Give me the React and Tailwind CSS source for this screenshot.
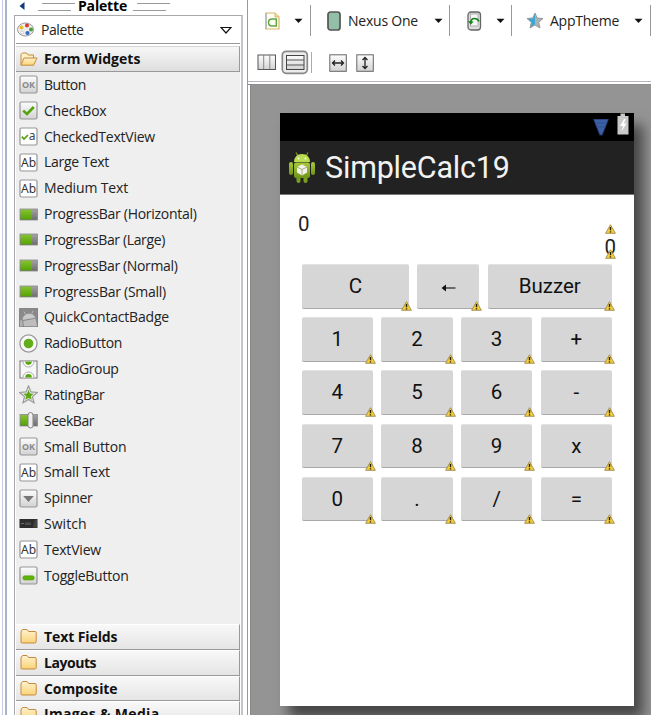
import { useLayoutEffect, useRef, useState } from "react";

const ui = "font-['Open_Sans','Noto_Sans_CJK_KR',sans-serif] text-[14px] leading-[20px] whitespace-nowrap";

// Text whose tracking is adjusted so that it fills the given width.
function Fit({ w, children, className = "" }) {
  const ref = useRef(null);
  const [ls, setLs] = useState(0);
  useLayoutEffect(() => {
    const natural = ref.current.getBoundingClientRect().width;
    setLs((w - natural) / children.length);
  }, []);
  return (
    <span ref={ref} className={`${ui} ${className}`} style={{ letterSpacing: ls }}>
      {children}
    </span>
  );
}

const Defs = () => (
  <svg width="0" height="0" className="absolute">
    <defs>
      <linearGradient id="btn" x1="0" y1="0" x2="0" y2="1"><stop offset="0" stopColor="#fdfdfd" /><stop offset="1" stopColor="#d2d2d2" /></linearGradient>
      <linearGradient id="green" x1="0" y1="0" x2="0" y2="1"><stop offset="0" stopColor="#86c232" /><stop offset="1" stopColor="#55a305" /></linearGradient>
      <linearGradient id="gray" x1="0" y1="0" x2="0" y2="1"><stop offset="0" stopColor="#a5a5a5" /><stop offset="1" stopColor="#6c6c6c" /></linearGradient>
      <linearGradient id="fold" x1="0" y1="0" x2="0" y2="1"><stop offset="0" stopColor="#fff3cf" /><stop offset="1" stopColor="#fbd277" /></linearGradient>
      <linearGradient id="droid" x1="0" y1="0" x2="0" y2="1"><stop offset="0" stopColor="#a9c93b" /><stop offset="1" stopColor="#6f9318" /></linearGradient>
    </defs>
  </svg>
);

const Box = ({ fill = "url(#btn)", children }) => (
  <>
    <rect x="1" y="1" width="17" height="17" rx="1.5" fill={fill} stroke="#969696" strokeWidth="1.2" />
    {children}
  </>
);

const glyph = "font-['Noto_Sans',sans-serif]";

const icons = {
  ok: <Box><text x="9.5" y="13" textAnchor="middle" fontSize="9" fontWeight="700" fill="#8b8b8b" className={glyph}>OK</text></Box>,
  check: <Box><path d="M4.2 9.6 L8 13 L14.8 6" fill="none" stroke="#55a30c" strokeWidth="2.6" /></Box>,
  checkedText: <Box fill="#fff"><path d="M2.8 9.6 L5 12 L9 8" fill="none" stroke="#55a30c" strokeWidth="1.7" /><text x="13.2" y="13.4" textAnchor="middle" fontSize="12" fill="#444" className={glyph}>a</text></Box>,
  ab: <Box fill="#fff"><text x="9.6" y="14" textAnchor="middle" fontSize="12" fill="#333" className={glyph}>Ab</text></Box>,
  progress: <><rect x="1" y="4" width="17.5" height="11" fill="url(#gray)" stroke="#8b8b8b" strokeWidth=".8" /><rect x="1.6" y="4.6" width="11.4" height="9.8" fill="url(#green)" /></>,
  badge: <><rect x=".6" y=".6" width="18" height="18" fill="#8a8a8a" stroke="#777" strokeWidth=".8" /><path d="M4 11.5 C4 5.500 13.500 4 16 9.500 Z M6.500 6.500 L5 3.500 M13 5.500 L13.800 3" fill="#c9c9c9" stroke="#c9c9c9" strokeWidth=".7" /><path d="M4.200 13 L16.500 10.800 L18.200 18.200 H5 Z" fill="#bdbdbd" /><path d="M1 12.500 L3 12 L4 18.200 H1 Z" fill="#b0b0b0" /></>,
  radio: <><circle cx="9.500" cy="9.500" r="8.600" fill="#f8f8f8" stroke="#999" strokeWidth="1.300" /><circle cx="9.500" cy="9.500" r="4.800" fill="#63ad18" /></>,
  radioGroup: <><rect x="1" y="1" width="17" height="17" fill="#f7f7f7" stroke="#8c8c8c" strokeWidth="1.200" /><path d="M4 1.500 A5.500 5.500 0 0 0 15 1.500 M4 17.500 A5.500 5.500 0 0 1 15 17.500" fill="#fff" stroke="#aaa" /><path d="M6.200 1.600 A3.300 3.300 0 0 0 12.800 1.600 Z M6.200 17.400 A3.300 3.300 0 0 1 12.800 17.400 Z" fill="#58a510" /></>,
  rating: <><path d="M9.500 1 L12 6.900 L18.300 7.500 L13.500 11.600 L15 17.800 L9.500 14.500 L4 17.800 L5.500 11.600 L.7 7.500 L7 6.900 Z" fill="#ececec" stroke="#9a9a9a" strokeWidth="1.200" /><path d="M9.500 4.800 L11 8.400 L14.700 8.800 L11.900 11.200 L12.700 14.800 L9.500 12.900 L6.300 14.800 L7.100 11.200 L4.300 8.800 L8 8.400 Z" fill="#5da913" /></>,
  seek: <><rect x="1" y="3.500" width="17.500" height="11.500" fill="url(#gray)" stroke="#8b8b8b" strokeWidth=".8" /><rect x="1.600" y="4.100" width="8" height="10.300" fill="url(#green)" /><rect x="9" y="1.500" width="5" height="15.500" rx="2.500" fill="#eee" stroke="#858585" /></>,
  spinner: <Box><path d="M4.200 7 H14.800 L9.500 13 Z" fill="#777" /></Box>,
  switch: <><rect x=".5" y="5" width="18" height="9" fill="#2c2c2c" /><path d="M2 9.500 H5 M7 8.500 V11 M9 8.500 V11 M11 8.500 V11" stroke="#777" strokeWidth=".9" /><path d="M14 13.500 L16 5.500 H18 V13.500 Z" fill="#444" /></>,
  toggle: <Box><rect x="3.800" y="9.800" width="11.500" height="4.200" rx="2" fill="#5fb307" stroke="#4c9400" strokeWidth=".5" /></Box>,
};

const Svg = ({ w = 19, h = 19, children, className = "" }) => (
  <svg width={w} height={h} viewBox={`0 0 ${w} ${h}`} className={`shrink-0 ${className}`}>{children}</svg>
);

const widgets = [
  ["Button", "ok", 42], ["CheckBox", "check", 62.5], ["CheckedTextView", "checkedText", 111], ["Large Text", "ab", 65],
  ["Medium Text", "ab", 84], ["ProgressBar (Horizontal)", "progress", 152.5], ["ProgressBar (Large)", "progress", 121],
  ["ProgressBar (Normal)", "progress", 133.5], ["ProgressBar (Small)", "progress", 122], ["QuickContactBadge", "badge", 125],
  ["RadioButton", "radio", 78], ["RadioGroup", "radioGroup", 74.5], ["RatingBar", "rating", 60.5], ["SeekBar", "seek", 50],
  ["Small Button", "ok", 82.5], ["Small Text", "ab", 66], ["Spinner", "spinner", 48.5], ["Switch", "switch", 42.5],
  ["TextView", "ab", 57], ["ToggleButton", "toggle", 84.5],
];

const Folder = () => (
  <Svg>
    <path d="M2 15.500 V5 Q2 3.800 3 3 L3.800 2.500 H8 L9.500 4.500 H16 Q17.200 4.500 17.200 5.800 V14.500 Q17.200 16 15.700 16 H3.200 Q2 16 2 15.500 Z" fill="url(#fold)" stroke="#c58a3c" strokeWidth="1" />
  </Svg>
);
const OpenFolder = () => (
  <Svg>
    <path d="M2 15 V4.500 L3.500 3 H7.500 L9 5 H14.500 V8" fill="#fff0c5" stroke="#c58a3c" />
    <path d="M2 15.200 L5 8 H18 L14.500 15.200 Z" fill="url(#fold)" stroke="#c58a3c" strokeLinejoin="round" />
  </Svg>
);

const Drawer = ({ label, w }) => (
  <div className="h-[25.84px] shrink-0 flex items-center gap-[6px] pl-[3px] border-b border-r border-[#999] border-t border-t-white bg-gradient-to-b from-[#f8f8f8] to-[#e5e5e5]">
    <Folder />
    <Fit w={w} className="font-bold text-[#111]">{label}</Fit>
  </div>
);

const Grip = () => <div className="w-[33px] h-[8px] border-y border-[#999] -skew-x-[30deg]" />;

function Palette() {
  return (
    <aside className="w-[248px] h-[715px] shrink-0 flex bg-white border-r border-[#999]">
      <div className="w-[7px] shrink-0 flex justify-between">
        <div className="w-[3px] border-r border-[#c4cbe0]" />
        <div className="w-[2px] bg-[#a9b3d0]" />
      </div>
      <div className="ml-[7px] w-[229px] shrink-0 flex flex-col h-[715px]">
        <div className="h-[15px] shrink-0 flex items-start">
          <Svg w={6} h={10} className="ml-[5px] mt-[1px]"><path d="M5.500 1 V9 L.5 5 Z" fill="#14387c" /></Svg>
          <div className="ml-[15px] mt-[3px]"><Grip /></div>
          <div className="ml-[5px] h-[14px] w-[50px] flex items-center -mt-[1px]"><Fit w={49} className="font-bold !leading-[14px] text-black">Palette</Fit></div>
          <div className="ml-[7px] mt-[3px]"><Grip /></div>
        </div>
        <div className="flex-1 min-h-0 overflow-hidden flex flex-col border-x border-t border-[#a9a9ad] border-r-[#c4c4ca] border-r-2 pl-[1px] pr-[1px]">
          <div className="h-[28px] shrink-0 flex items-center border-b border-[#999]">
            <Svg className="ml-[1px]">
              <ellipse cx="8.500" cy="9.500" rx="8" ry="6.500" fill="#eee" stroke="#999" />
              <circle cx="4.500" cy="7.500" r="2" fill="#e8bb28" /><circle cx="10" cy="5.500" r="2" fill="#d63b2a" />
              <circle cx="14" cy="9.500" r="2" fill="#4a9d3c" /><circle cx="10.500" cy="13" r="2.100" fill="#376bc0" /><circle cx="5" cy="12.500" r="1.400" fill="#fff" stroke="#aaa" strokeWidth=".5" />
            </Svg>
            <div className="ml-[5px] w-[180px] flex"><Fit w={42.500} className="text-[#222]">Palette</Fit></div>
            <Svg w={12} h={9} className="-ml-[1px] mt-[2px]"><path d="M1 1.500 H11 L6 7 Z" fill="#fff" stroke="#111" strokeWidth="1.200" /></Svg>
          </div>
          <div className="mt-[2px] h-[26px] shrink-0 flex items-center gap-[6px] pl-[3px] border-b border-r border-[#999] border-t border-t-[#d4d4d4] bg-gradient-to-b from-[#f7f7f7] to-[#dedede]">
            <OpenFolder />
            <Fit w={96.500} className="font-bold text-[#111]">Form Widgets</Fit>
          </div>
          <div className="h-[552px] shrink-0 bg-[#efefef] flex flex-col">
            {widgets.map(([name, icon, w]) => (
              <div key={name} className="h-[25.84px] shrink-0 flex items-center gap-[6px] pl-[3px]">
                <Svg>{icons[icon]}</Svg>
                <Fit w={w} className="text-[#222]">{name}</Fit>
              </div>
            ))}
          </div>
          <Drawer label="Text Fields" w={73.500} />
          <Drawer label="Layouts" w={52} />
          <Drawer label="Composite" w={73.500} />
          <Drawer label="Images & Media" w={115.500} />
        </div>
      </div>
    </aside>
  );
}

const Caret = ({ className }) => <Svg w={9} h={6} className={className}><path d="M.5 .8 H8.500 L4.500 5 Z" fill="#111" /></Svg>;
const Sep = ({ className }) => <div className={`w-px h-[31px] shrink-0 bg-[#999] ${className}`} />;

function Toolbar() {
  return (
    <header className="h-[85px] shrink-0 bg-white border-b border-[#8c8c8c] flex flex-col">
      <div className="h-[41px] flex items-center">
        <Svg w={15} h={18} className="ml-[17px]">
          <path d="M1 1 H10 L14 5 V17 H1 Z" fill="#fffdf4" stroke="#d9b66b" strokeWidth="1.200" /><path d="M1 17 V1" stroke="#91a9d4" /><path d="M10 1 V5 H14" fill="#f5dca0" stroke="#d9b66b" />
          <path d="M11.300 6.500 V14 H7 Q3.500 14 3.500 10.500 Q3.500 7 7 7 H11.300" fill="none" stroke="#5ca943" strokeWidth="1.500" />
        </Svg>
        <Caret className="ml-[14px]" />
        <Sep className="ml-[7px]" />
        <Svg w={14} h={20} className="ml-[16px]"><rect x="1" y="1" width="12" height="18" rx="2.500" fill="#93bfa9" stroke="#555" strokeWidth="1.700" /></Svg>
        <div className="ml-[7px] w-[86px] flex"><Fit w={70} className="text-[#222]">Nexus One</Fit></div>
        <Caret />
        <Sep className="ml-[6px]" />
        <Svg w={15} h={20} className="ml-[17px]">
          <rect x="1" y="1" width="12.500" height="18" rx="3" fill="#ddd" stroke="#666" strokeWidth="1.300" /><rect x="3.500" y="3" width="7.500" height="12" fill="#f7f7f7" stroke="#999" strokeWidth=".7" />
          <path d="M3.500 12 Q4 7.500 7.500 7.500 Q10.500 7.500 12 10.500" fill="none" stroke="#16851d" strokeWidth="1.600" /><path d="M1 10 L3.800 13.800 L6.600 10.500 Z" fill="#16851d" />
        </Svg>
        <Caret className="ml-[14px]" />
        <Sep className="ml-[6px]" />
        <Svg w={18} h={17} className="ml-[14px]">
          <path d="M9 1 L11.200 6 L17 6.500 L12.700 10.300 L14 16 L9 13 L4 16 L5.300 10.300 L1 6.500 L6.800 6 Z" fill="#aeb3b7" stroke="#888" strokeWidth=".8" />
          <path d="M9 1.800 L7 6.500 L2 7 L5.900 10.300 L4.600 15 L9 12.300 Z" fill="#38a9d6" />
        </Svg>
        <div className="ml-[6px] w-[84px] flex"><Fit w={69} className="text-[#222]">AppTheme</Fit></div>
        <Caret />
        <Sep className="ml-[7px]" />
      </div>
      <div className="h-[41px] shrink-0 flex items-center pl-[9px] pt-[3px] border-b border-[#b5b5bd]">
        <Svg w={20} h={17}><rect x="1" y="1" width="17.500" height="14.500" fill="url(#btn)" stroke="#555" /><path d="M6.700 1 V15 M12.800 1 V15" stroke="#888" /></Svg>
        <Svg w={28} h={25} className="ml-[4px]">
          <rect x="1.300" y="1.300" width="25" height="22" rx="4" fill="#ececec" stroke="#888" strokeWidth="1.700" />
          <rect x="5.500" y="5.500" width="17.500" height="14" fill="url(#btn)" stroke="#444" /><path d="M5.500 10 H23 M5.500 15 H23" stroke="#555" />
        </Svg>
        <div className="ml-[2px] w-px h-[21px] bg-[#aaa]" />
        <Svg w={18} h={18} className="ml-[17px]"><rect x=".8" y=".8" width="16.500" height="16.500" fill="url(#btn)" stroke="#666" /><path d="M3.500 9 H14.500 M6 6.500 L3.500 9 L6 11.500 M12 6.500 L14.500 9 L12 11.500" fill="none" stroke="#222" strokeWidth="1.300" /></Svg>
        <Svg w={18} h={18} className="ml-[9px]"><rect x=".8" y=".8" width="16.500" height="16.500" fill="url(#btn)" stroke="#666" /><path d="M9 3.500 V14.500 M6.500 6 L9 3.500 L11.500 6 M6.500 12 L9 14.500 L11.500 12" fill="none" stroke="#222" strokeWidth="1.300" /></Svg>
      </div>
    </header>
  );
}

const Warn = ({ className }) => (
  <Svg w={11} h={10} className={className}>
    <path d="M5.500 .7 L10.400 9.300 H.6 Z" fill="#f3cf3d" stroke="#a18a4c" strokeWidth=".9" strokeLinejoin="round" />
    <path d="M5.500 3 V6.300 M5.500 7.200 V8.600" stroke="#2b2300" strokeWidth="1.400" />
  </Svg>
);

const Key = ({ label, className = "" }) => (
  <div className={`relative h-[44.5px] flex items-center justify-center rounded-[2px] bg-[#d6d6d6] border-b border-b-[#a8a8a8] border-t border-t-[#e2e2e2] text-[20.5px] leading-none text-[#111] ${className}`}>
    {label === "←" ? (
      <Svg w={15} h={10} className="mt-[3px]"><path d="M4 5 H14.500" stroke="#222" strokeWidth="1.200" /><path d="M.5 5 L5 1.500 V8.500 Z" fill="#111" /></Svg>
    ) : <span>{label}</span>}
    <Warn className="absolute -right-[3px] -bottom-[3.500px]" />
  </div>
);

function Phone() {
  return (
    <div className="w-[354px] h-[593px] shrink-0 bg-white flex flex-col shadow-[9px_12px_12px_rgba(0,0,0,0.53)] font-[Roboto,sans-serif]">
      <div className="h-[27.5px] shrink-0 bg-black flex justify-end">
        <Svg w={18} h={19} className="mt-[5px]"><path d="M1 1 H17 L10.500 17.500 H7.500 Z" fill="#1c3263" /><path d="M2 1.500 H16 L10 16.500 H8 Z" fill="#3c5fa6" /><path d="M3 5 H15 M4.500 9 H13.500" stroke="#31528f" /></Svg>
        <Svg w={12} h={22} className="ml-[7px] mr-[5px]"><path d="M.5 3 H3.500 V.5 H8 V3 H11.500 V21.500 H.5 Z" fill="#c9c9c9" /><path d="M7 6 L3 13 H6 L4.500 18.500 L9.500 10.500 H6.700 L9 6 Z" fill="#fff" /></Svg>
      </div>
      <div className="h-[54px] shrink-0 bg-[#222] border-b border-[#777] flex items-center pt-[1px]">
        <Svg w={28} h={34} className="ml-[8px]">
          <path d="M8 1.500 L10 5 M20 1.500 L18 5" stroke="#7e9f2a" strokeWidth="1.200" />
          <path d="M6 11 Q6.500 3 14 3 Q21.500 3 22 11 Z" fill="#bbdc50" /><circle cx="10.500" cy="7.500" r=".9" fill="#fff" /><circle cx="17.500" cy="7.500" r=".9" fill="#fff" />
          <rect x="1" y="11" width="4" height="13" rx="2" fill="url(#droid)" /><rect x="23" y="11" width="4" height="13" rx="2" fill="url(#droid)" />
          <rect x="8.500" y="24" width="4" height="8" rx="2" fill="#789e20" /><rect x="15.500" y="24" width="4" height="8" rx="2" fill="#789e20" />
          <rect x="6" y="11.500" width="16" height="15.500" rx="2" fill="url(#droid)" />
          <path d="M14 13.500 L19 16 V21.500 L14 24.500 L9 21.500 V16 Z" fill="#f3f3ec" /><path d="M9 16 L14 18.500 L19 16 M14 18.500 V24.500" fill="none" stroke="#8a9c60" strokeWidth=".8" />
        </Svg>
        <span className="ml-[9px] mt-[1px] text-[30.5px] leading-none tracking-[-0.2px] text-[#f2f2f2]">SimpleCalc19</span>
      </div>
      <div className="h-[69.6px] shrink-0 flex justify-between pl-[18px] pr-[18px] text-[20.5px] leading-[24px] text-[#222]">
        <span className="mt-[17px]">0</span>
        <div className="flex flex-col items-end">
          <Warn className="mt-[29px]" />
          <span className="relative mt-[1px]">0<Warn className="absolute right-0 bottom-[0px]" /></span>
        </div>
      </div>
      <div className="ml-[21.8px] w-[310px] flex flex-col gap-[8.7px]">
        <div className="flex gap-[8.5px]">
          <Key label="C" className="w-[107px]" /><Key label="←" className="w-[62px]" /><Key label="Buzzer" className="w-[124px]" />
        </div>
        <div className="grid grid-cols-4 gap-x-[8.6px] gap-y-[8.7px]">
          {["1", "2", "3", "+", "4", "5", "6", "-", "7", "8", "9", "x", "0", ".", "/", "="].map((k) => <Key key={k} label={k} />)}
        </div>
      </div>
    </div>
  );
}

export default function App() {
  return (
    <div className="w-[651px] h-[715px] overflow-hidden flex bg-white">
      <Defs />
      <Palette />
      <main className="flex-1 min-w-0 flex flex-col">
        <Toolbar />
        <div className="flex-1 min-h-0 ml-[2px] border-l border-[#888] bg-[#949494] pl-[29px] pt-[28px] flex items-start overflow-hidden">
          <Phone />
        </div>
      </main>
    </div>
  );
}
